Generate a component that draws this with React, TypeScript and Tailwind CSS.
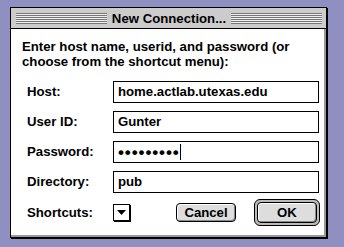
import React from 'react';

const fields = [
  { label: 'Host:', value: 'home.actlab.utexas.edu' },
  { label: 'User ID:', value: 'Gunter' },
  { label: 'Password:', value: '•••••••••', secret: true },
  { label: 'Directory:', value: 'pub' },
];

function Stripes() {
  return (
    <div className="flex-1 h-[11px] bg-[repeating-linear-gradient(to_bottom,#777777_0_1px,#eeeeee_1px_2px)]" />
  );
}

export default function App() {
  return (
    <div className="w-[344px] h-[247px] bg-[#8f8fc2] pl-[10px] pt-[7px] font-['Liberation_Sans',Arial,sans-serif] font-bold text-[13.2px] text-black">
      {/* Window */}
      <div className="w-[317px] h-[231px] border border-black bg-white shadow-[1px_1px_0_#000] flex flex-col">
        {/* Title bar */}
        <div className="h-[21px] bg-[#cccccc] border-b border-black flex items-center pl-[5px] pr-[4px]">
          <Stripes />
          <span className="px-[5px] leading-[13px]">New Connection...</span>
          <Stripes />
        </div>

        {/* Content */}
        <div className="flex-1 border-r-2 border-b-2 border-[#999999] pt-[10px] pl-[11px]">
          <p className="leading-[15px]">
            Enter host name, userid, and password (or
            <br />
            choose from the shortcut menu):
          </p>

          <div className="mt-[12px] pl-[5px] flex flex-col gap-[8px]">
            {fields.map((f) => (
              <div key={f.label} className="flex items-center">
                <span className="w-[86px]">{f.label}</span>
                <div className="w-[206px] h-[22px] border border-black flex items-center pl-[4px]">
                  {f.secret ? (
                    <>
                      <span className="tracking-[0.9px] text-[17px] leading-none">{f.value}</span>
                      <span className="w-px h-[16px] bg-black" />
                    </>
                  ) : (
                    <span>{f.value}</span>
                  )}
                </div>
              </div>
            ))}

            {/* Shortcuts row */}
            <div className="flex items-center -mt-[2px]">
              <span className="w-[86px]">Shortcuts:</span>
              <div className="w-[17px] h-[17px] border border-black bg-white shadow-[1px_1px_0_#000] flex items-center justify-center">
                <svg width="9" height="5" viewBox="0 0 9 5">
                  <polygon points="0,0 9,0 4.5,5" fill="#000" />
                </svg>
              </div>
              <button className="ml-[46px] w-[60px] h-[19px] rounded-[4px] border border-black bg-[#dddddd] shadow-[inset_1px_1px_0_#ffffff,inset_-1px_-1px_0_#888888] flex items-center justify-center leading-none">
                Cancel
              </button>
              <div className="ml-[18px] w-[66px] h-[27px] rounded-[6px] border border-black bg-[#bbbbbb] p-[2px] flex">
                <button className="flex-1 rounded-[4px] border border-black bg-[#dddddd] shadow-[inset_1px_1px_0_#ffffff,inset_-1px_-1px_0_#888888] flex items-center justify-center leading-none">
                  OK
                </button>
              </div>
            </div>
          </div>
        </div>
      </div>
    </div>
  );
}
